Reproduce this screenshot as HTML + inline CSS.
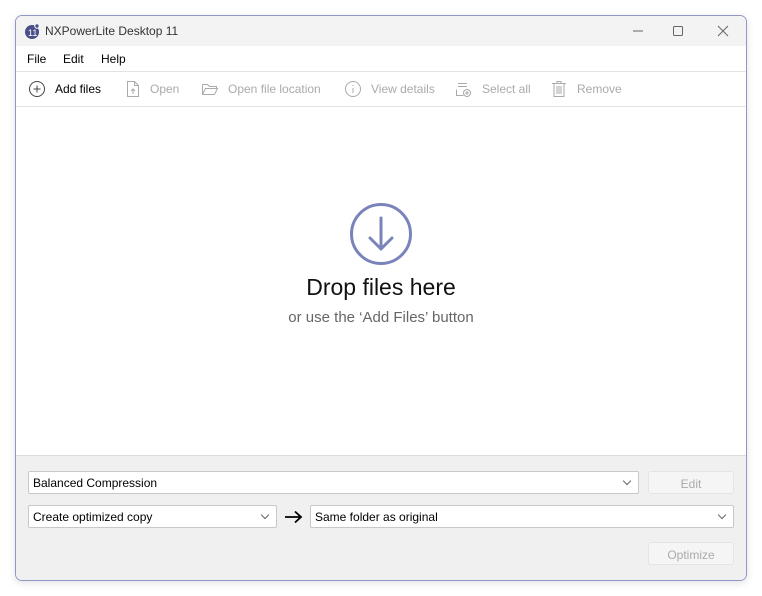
<!DOCTYPE html>
<html><head><meta charset="utf-8"><style>
*{margin:0;padding:0;box-sizing:border-box}
body{width:762px;height:596px;background:#fff;font-family:"Liberation Sans",sans-serif;position:relative;overflow:hidden}
.win{position:absolute;left:15px;top:15px;width:732px;height:566px;border:1px solid #8f97c4;border-radius:7px;overflow:hidden;background:#fff;box-shadow:0 2px 8px rgba(0,0,0,.12)}
.title{position:absolute;left:0;top:0;width:100%;height:30px;background:#f3f3f3;font-size:12px;color:#333}
.title span{position:absolute;left:29px;top:8px}
.menu{position:absolute;top:30px;left:0;width:100%;height:25px;font-size:12px;color:#000}
.menu span{position:absolute;top:6px}
.tb{position:absolute;top:55px;left:0;width:100%;height:36px;border-top:1px solid #e3e3e3;border-bottom:1px solid #e3e3e3;font-size:12px;color:#aaa}
.tb .it{position:absolute;top:10px}
.tb svg{position:absolute;top:8px}
.bottom{position:absolute;top:439px;left:0;width:100%;height:127px;background:#f0f0f0;border-top:1px solid #dcdcdc}
.sel{position:absolute;background:#fff;border:1px solid #c8c8c8;border-radius:2px;height:23px;font-size:12px;padding:4px 4px;color:#000}
.sel:after{content:"";position:absolute;right:8px;top:6px;width:5px;height:5px;border-right:1px solid #666;border-bottom:1px solid #666;transform:rotate(45deg)}
.btn{position:absolute;background:#f5f5f5;border:1px solid #e4e4e4;border-radius:3px;height:23px;font-size:12px;color:#aaa;text-align:center;padding-top:5px}
</style></head><body>
<div class="win">
<div class="title">
<svg style="position:absolute;left:8px;top:7px" width="16" height="16"><circle cx="8" cy="9" r="7" fill="#4a4f8a"/><circle cx="13" cy="3" r="2.2" fill="#4a4f8a" stroke="#fff" stroke-width="1"/><text x="4" y="13" font-size="9" fill="#fff" font-family="Liberation Sans">11</text></svg>
<span>NXPowerLite Desktop 11</span>
<svg style="position:absolute;left:600px;top:8px" width="120" height="14"><line x1="17" y1="7" x2="27" y2="7" stroke="#666"/><rect x="57.5" y="2.5" width="9" height="9" fill="none" stroke="#666" rx="1"/><path d="M102 2l10 10M112 2l-10 10" stroke="#666"/></svg>
</div>
<div class="menu"><span style="left:11px">File</span><span style="left:47px">Edit</span><span style="left:85px">Help</span></div>
<div class="tb">
<svg style="left:12px" width="18" height="18"><circle cx="9" cy="9" r="7.5" fill="none" stroke="#444"/><path d="M9 5.5v7M5.5 9h7" stroke="#444"/></svg>
<span class="it" style="left:39px;color:#000">Add files</span>
<svg style="left:109px" width="16" height="18"><path d="M2.5 1.5h7l4 4v11h-11z M9.5 1.5v4h4" fill="none" stroke="#aaa"/><path d="M8 14V9M6 11l2-2 2 2" fill="none" stroke="#aaa"/></svg>
<span class="it" style="left:134px">Open</span>
<svg style="left:185px" width="18" height="18"><path d="M1.5 4.5h5l2 2h7v2 M1.5 4.5v10h12l3-6h-12l-3 6" fill="none" stroke="#aaa"/></svg>
<span class="it" style="left:212px">Open file location</span>
<svg style="left:328px" width="18" height="18"><circle cx="9" cy="9" r="7.5" fill="none" stroke="#aaa"/><path d="M9 8v5M9 5v1" stroke="#aaa"/></svg>
<span class="it" style="left:355px">View details</span>
<svg style="left:438px" width="18" height="18"><path d="M4 3.5h9M4 6.5h9M2.5 9.5v6h7" fill="none" stroke="#aaa"/><circle cx="13" cy="13" r="3.5" fill="none" stroke="#aaa"/><path d="M13 11v4M11 13h4" stroke="#aaa"/></svg>
<span class="it" style="left:466px">Select all</span>
<svg style="left:535px" width="16" height="18"><path d="M1 3.5h14M6 3.5V1.5h4v2M3 3.5v13h10v-13M6 6v8M8 6v8M10 6v8" fill="none" stroke="#aaa"/></svg>
<span class="it" style="left:561px">Remove</span>
</div>
<svg style="position:absolute;left:333px;top:186px" width="64" height="64"><circle cx="32" cy="32" r="29.5" fill="none" stroke="#7a84ba" stroke-width="3"/><path d="M32 16v31M21 36l11 11 11-11" fill="none" stroke="#7a84ba" stroke-width="3" stroke-linecap="round" stroke-linejoin="round"/></svg>
<div style="position:absolute;top:258px;width:100%;text-align:center;font-size:23px;color:#111">Drop files here</div>
<div style="position:absolute;top:293px;width:100%;text-align:center;font-size:15px;color:#666">or use the ‘Add Files’ button</div>
<div class="bottom">
<div class="sel" style="left:12px;top:15px;width:611px">Balanced Compression</div>
<div class="btn" style="left:632px;top:15px;width:86px">Edit</div>
<div class="sel" style="left:12px;top:49px;width:249px">Create optimized copy</div>
<svg style="position:absolute;left:268px;top:54px" width="20" height="14"><path d="M1 7h16M11 1.5l6 5.5-6 5.5" fill="none" stroke="#000" stroke-width="1.8"/></svg>
<div class="sel" style="left:294px;top:49px;width:424px">Same folder as original</div>
<div class="btn" style="left:632px;top:86px;width:86px">Optimize</div>
</div>
</div>
</body></html>
